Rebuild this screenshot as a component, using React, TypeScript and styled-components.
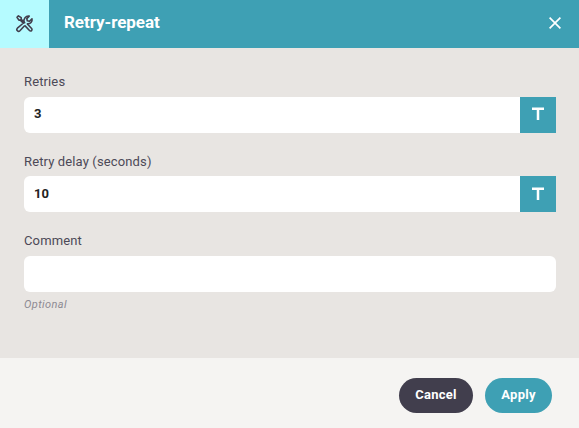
import React, { useState } from "react";
import styled, { createGlobalStyle } from "styled-components";

const teal = "#3ea0b4";
const ink = "#413e4d";

const GlobalStyle = createGlobalStyle`
  * { box-sizing: border-box; }
  body { margin: 0; font-family: Roboto, sans-serif; }
`;

const Dialog = styled.section`
  display: flex;
  flex-direction: column;
  width: 100%;
  height: 100vh;
  background: #e8e5e2;
`;

const Header = styled.header`
  display: flex;
  height: 48px;
  flex: none;
  align-items: center;
  background: ${teal};
  color: #fff;
`;

const IconTile = styled.div`
  display: flex;
  width: 49px;
  height: 48px;
  align-items: center;
  padding: 0 0 1px 15px;
  background: #b5fbff;
  color: ${ink};
`;

const Title = styled.h1`
  flex: 1;
  margin: 0;
  padding: 0 0 4px 15px;
  font-size: 17px;
  line-height: 24px;
  font-weight: 700;
  letter-spacing: -0.05px;
`;

const CloseButton = styled.button`
  display: flex;
  width: 48px;
  height: 48px;
  padding: 0 0 2px;
  align-items: center;
  justify-content: center;
  border: 0;
  background: none;
  color: inherit;
`;

const Form = styled.main`
  display: flex;
  flex: 1;
  flex-direction: column;
  gap: 18.4px;
  padding: 24px 23px 0 24px;
`;

const Field = styled.div`
  display: flex;
  flex-direction: column;
`;

const Label = styled.label`
  height: 25px;
  padding-top: 1.2px;
  font-size: 13px;
  line-height: 18px;
  letter-spacing: 0.13px;
  color: #4c4957;
`;

const Control = styled.div`
  display: flex;
  height: 36px;
  border-radius: 6px;
  background: #fff;
`;

const Input = styled.input`
  flex: 1;
  min-width: 0;
  padding: 0 10px 2.5px;
  border: 0;
  outline: 0;
  background: transparent;
  color: #222;
  font: 700 13px Roboto, sans-serif;
  letter-spacing: 0.13px;
`;

const TypeButton = styled.button`
  display: flex;
  width: 36px;
  height: 36px;
  padding: 0 0 1.5px;
  align-items: center;
  justify-content: center;
  border: 0;
  background: ${teal};
  color: #fff;
`;

const Hint = styled.span`
  padding-top: 5px;
  font-size: 11px;
  line-height: 16px;
  font-style: italic;
  letter-spacing: 0.4px;
  color: #8d8a92;
`;

const Footer = styled.footer`
  display: flex;
  flex: none;
  height: 70px;
  align-items: flex-start;
  justify-content: flex-end;
  gap: 12px;
  padding: 20px 27px 0 0;
  background: #f5f4f2;
`;

const ActionButton = styled.button<{ $color: string; $width: number }>`
  width: ${(p) => p.$width}px;
  height: 35px;
  padding: 0 0 2px;
  border: 0;
  border-radius: 18px;
  background: ${(p) => p.$color};
  color: #fff;
  font: 700 13px Roboto, sans-serif;
  letter-spacing: 0.25px;
`;

const ToolsIcon = () => (
  <svg width="19" height="19" viewBox="0 0 19 19" fill="none" stroke="currentColor" strokeWidth="1.6" strokeLinejoin="round" strokeLinecap="round">
    <path d="M7.3 10 2.4 14.2a1.7 1.7 0 0 0 2.5 2.5L9.3 12" />
    <path d="M9 8.2C8.3 5 10.7 1.6 14.2 2.1L11.8 4.6l.5 2.2 2.2.5L17 4.8c.6 3-1.7 5.2-4.4 5" />
    <path d="M2 3.3 3.4 1.9 6.2 3.7V5.2L9.7 8.7M2 3.3 3.9 6.1H5.3L8.4 9.2" />
    <path d="m10.1 11.9 4.4 4.6a1.4 1.4 0 0 0 2.1-2L12.4 10" />
  </svg>
);

const CloseIcon = () => (
  <svg width="12" height="12" viewBox="0 0 12 12" stroke="currentColor" strokeWidth="1.7">
    <path d="M.6.6 11.4 11.4M11.4.6.6 11.4" />
  </svg>
);

const TypeIcon = () => (
  <svg width="12" height="14" viewBox="0 0 12 14" fill="currentColor">
    <path d="M0 .5h12V3H7.25v10H4.75V3H0z" />
  </svg>
);

type FieldProps = {
  id: string;
  label: string;
  initial?: string;
  typed?: boolean;
  hint?: string;
};

function TextField({ id, label, initial = "", typed, hint }: FieldProps) {
  const [value, setValue] = useState(initial);
  return (
    <Field>
      <Label htmlFor={id}>{label}</Label>
      <Control>
        <Input id={id} value={value} onChange={(e) => setValue(e.target.value)} />
        {typed && (
          <TypeButton type="button" aria-label="Text value">
            <TypeIcon />
          </TypeButton>
        )}
      </Control>
      {hint && <Hint>{hint}</Hint>}
    </Field>
  );
}

export default function App() {
  return (
    <>
      <GlobalStyle />
      <Dialog>
        <Header>
          <IconTile><ToolsIcon /></IconTile>
          <Title>Retry-repeat</Title>
          <CloseButton aria-label="Close"><CloseIcon /></CloseButton>
        </Header>
        <Form>
          <TextField id="retries" label="Retries" initial="3" typed />
          <TextField id="delay" label="Retry delay (seconds)" initial="10" typed />
          <TextField id="comment" label="Comment" hint="Optional" />
        </Form>
        <Footer>
          <ActionButton $color={ink} $width={74}>Cancel</ActionButton>
          <ActionButton $color={teal} $width={67}>Apply</ActionButton>
        </Footer>
      </Dialog>
    </>
  );
}
